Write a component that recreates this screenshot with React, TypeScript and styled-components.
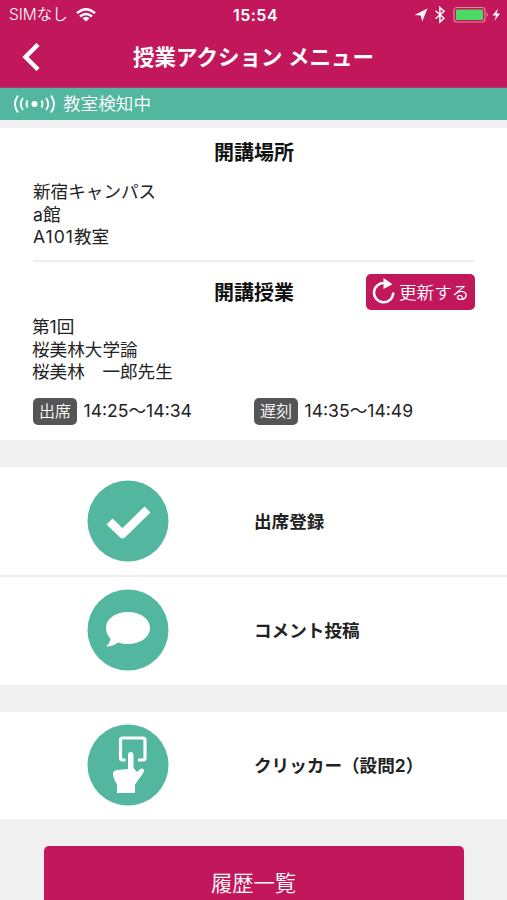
import React from "react";
import styled, { createGlobalStyle } from "styled-components";

const PINK = "#c2185b";
const GREEN = "#53b79f";

const Global = createGlobalStyle`
  * { box-sizing: border-box; }
  body { margin: 0; background: #f0f0f0; }
`;

const Screen = styled.div`
  height: 900px;
  overflow: hidden;
  display: flex;
  flex-direction: column;
  background: #f0f0f0;
  color: #222;
  font-family: Inter, "Noto Sans CJK JP", sans-serif;
  font-size: 17.6px;
  svg { display: block; flex: none; }
`;

const Header = styled.header`
  flex: none;
  height: 87.5px;
  background: ${PINK};
  color: #fff;
  border-bottom: 1px solid #a04463;
`;

const StatusBar = styled.div`
  height: 30px;
  display: grid;
  grid-template-columns: 1fr auto 1fr;
  align-items: center;
  padding: 0 5px 0 9px;
`;

const Carrier = styled.div`
  display: flex;
  align-items: center;
  gap: 8px;
  font-size: 15.5px;
  font-weight: 350;
  line-height: 30px;
`;

const Clock = styled.div`
  font-size: 16px;
  font-weight: 600;
  letter-spacing: 0.5px;
  line-height: 30px;
`;

const Indicators = styled.div`
  display: flex;
  align-items: center;
  justify-content: flex-end;
`;

const NavBar = styled.div`
  display: grid;
  grid-template-columns: 50px 1fr 50px;
  align-items: center;
  height: 54px;
`;

const BackButton = styled.button`
  border: 0;
  padding: 0 0 0 22px;
  background: none;
  color: inherit;
`;

const Title = styled.h1`
  margin: 0;
  text-align: center;
  font-size: 21.5px;
  font-weight: 600;
  line-height: 54px;
  white-space: nowrap;
`;

const Detecting = styled.div`
  flex: none;
  height: 32px;
  display: flex;
  align-items: center;
  gap: 8px;
  padding-left: 13px;
  background: ${GREEN};
  color: #fff;
  font-weight: 350;
  line-height: 32px;
`;

const Info = styled.section`
  flex: none;
  height: 312px;
  margin-top: 8.5px;
  padding: 0 33px;
  background: #fff;
`;

const Heading = styled.h2`
  margin: 0;
  grid-column: 2;
  text-align: center;
  color: #111;
  font-size: 20px;
  font-weight: 700;
  line-height: 50px;
`;

const Lines = styled.div<{ $shift?: boolean }>`
  margin-left: ${(p) => (p.$shift ? "-1px" : "0")};
  line-height: 22.5px;
  white-space: pre;
`;

const Room = styled.span`
  letter-spacing: 1px;
`;

const Place = styled.div`
  height: 134px;
  margin-right: -1px;
  border-bottom: 2px solid #eee;
  & > ${Lines} { margin-top: 3px; }
`;

const LessonHead = styled.div`
  height: 54px;
  margin-right: -1px;
  display: grid;
  grid-template-columns: 1fr auto 1fr;
  align-items: center;
  padding-top: 6px;
`;

const Refresh = styled.button`
  justify-self: end;
  width: 109px;
  height: 36px;
  margin-top: -3px;
  display: flex;
  align-items: center;
  gap: 3px;
  padding: 0 0 1px 6px;
  border: 0;
  border-radius: 5px;
  background: ${PINK};
  color: #fff;
  font: inherit;
  font-weight: 350;
  white-space: nowrap;
`;

const Times = styled.div`
  display: grid;
  grid-template-columns: 221px 1fr;
  margin-top: 14px;
`;

const Time = styled.div`
  display: flex;
  align-items: center;
  gap: 6.5px;
  font-size: 17.6px;
  line-height: 25px;
  white-space: nowrap;
`;

const TimeRange = styled.span`
  margin-top: -2px;
`;

const Tag = styled.span`
  width: 44px;
  height: 27px;
  border-radius: 5px;
  background: #555;
  color: #fff;
  font-size: 16px;
  font-weight: 350;
  line-height: 26px;
  text-align: center;
`;

const Menu = styled.nav`
  flex: none;
  margin-top: 27px;
  background: #fff;
`;

const MenuItem = styled.div`
  height: 107.5px;
  display: grid;
  grid-template-columns: 87px 167px 1fr;
  align-items: center;
  font-weight: 600;
  & + & { height: 110px; border-top: 2px solid #eee; padding-bottom: 1px; }
  svg { grid-column: 2; }
`;

const MenuLabel = styled.span`
  padding-top: 2px;
  line-height: 24px;
`;

const History = styled.button`
  flex: none;
  align-self: center;
  width: 420px;
  height: 74px;
  margin-top: 27px;
  padding: 0 0 4px;
  border: 0;
  border-radius: 5px;
  background: ${PINK};
  color: #fff;
  font: inherit;
  font-size: 21.3px;
  font-weight: 350;
`;

const Wifi = () => (
  <svg width="20" height="14" viewBox="0 0 20 14" fill="none" stroke="#fff" strokeWidth="2.4">
    <path d="M1 5.200Q10-2.600 19 5.200M4 8.500Q10 3.400 16 8.500" />
    <path d="M6.500 10.200Q10 7.200 13.500 10.200L10 13.600Z" fill="#fff" stroke="none" />
  </svg>
);

const StatusIcons = () => (
  <svg width="90" height="18" viewBox="412 6 90 18" fill="none">
    <path d="M427.500 8.500L422.200 21.500L420.700 15.600L414.500 15Z" fill="#fff" />
    <path d="M435.500 10.800L444 18.300L439.900 22V7.500L444 11.200L435.500 18.700" stroke="#fff" strokeWidth="1.500" />
    <rect x="454" y="7.500" width="31" height="14.500" rx="3" stroke="#dc8ba0" strokeWidth="1.200" />
    <rect x="456" y="9.500" width="27" height="10.500" rx="1" fill="#4cd964" />
    <path d="M486.700 12.300Q489 14.700 486.700 17.200Z" fill="#dc8ba0" />
    <path d="M498 8.500L492.500 15.500H496L494.500 21L500 13.600H496.500Z" fill="#fff" />
  </svg>
);

const Chevron = () => (
  <svg width="18" height="28" viewBox="0 0 18 28" fill="none" stroke="#fff" strokeWidth="4.500">
    <path d="M16 1.500L3.500 14L16 26.500" />
  </svg>
);

const Signal = () => (
  <svg width="42" height="20" viewBox="0 0 42 20" fill="none" stroke="#fff" strokeWidth="1.900">
    <circle cx="21.500" cy="10" r="3" fill="#fff" stroke="none" />
    <path d="M14.500 6.500Q12.500 10 14.500 13.500M28.500 6.500Q30.500 10 28.500 13.500M10 4Q5.500 10 10 16M33 4Q37.500 10 33 16M5 1.500Q-1 10 5 18.500M38 1.500Q44 10 38 18.500" />
  </svg>
);

const RefreshIcon = () => (
  <svg width="24" height="26" viewBox="0 0 24 26" fill="none">
    <path d="M13 5.200A9.600 9.600 0 1 0 21.200 14.500" stroke="#fff" strokeWidth="2.500" />
    <path d="M11.500 0L20.500 6.200L11.500 11Z" fill="#fff" />
  </svg>
);

const Disc = ({ children }: { children: React.ReactNode }) => (
  <svg width="82" height="82" viewBox="0 0 82 82">
    <circle cx="41" cy="41" r="40.500" fill={GREEN} />
    {children}
  </svg>
);

export default function App() {
  return (
    <>
      <Global />
      <Screen>
        <Header>
          <StatusBar>
            <Carrier>SIMなし<Wifi /></Carrier>
            <Clock>15:54</Clock>
            <Indicators><StatusIcons /></Indicators>
          </StatusBar>
          <NavBar>
            <BackButton aria-label="戻る"><Chevron /></BackButton>
            <Title>授業アクション メニュー</Title>
          </NavBar>
        </Header>
        <Detecting><Signal />教室検知中</Detecting>
        <Info>
          <Place>
            <Heading>開講場所</Heading>
            <Lines>{"新宿キャンパス\na館\n"}<Room>A101</Room>教室</Lines>
          </Place>
          <LessonHead>
            <Heading>開講授業</Heading>
            <Refresh><RefreshIcon />更新する</Refresh>
          </LessonHead>
          <Lines $shift>{"第1回\n桜美林大学論\n桜美林　一郎先生"}</Lines>
          <Times>
            <Time><Tag>出席</Tag><TimeRange>14:25〜14:34</TimeRange></Time>
            <Time><Tag>遅刻</Tag><TimeRange>14:35〜14:49</TimeRange></Time>
          </Times>
        </Info>
        <Menu>
          <MenuItem>
            <Disc>
              <path d="M22.500 41.500L35.500 54L60.500 29.500" fill="none" stroke="#fff" strokeWidth="8.500" strokeLinejoin="round" />
            </Disc>
            <MenuLabel>出席登録</MenuLabel>
          </MenuItem>
          <MenuItem>
            <Disc>
              <path d="M41 23C53.500 23 63 30 63 39S53.500 55 41 55Q35.500 55 31 53.500Q26 57.500 19 57.500Q23 54 23.500 49.500C20.500 46.500 19 43 19 39C19 30 28.500 23 41 23Z" fill="#fff" />
            </Disc>
            <MenuLabel>コメント投稿</MenuLabel>
          </MenuItem>
        </Menu>
        <Menu>
          <MenuItem>
            <Disc>
              <path d="M38.500 36H35.500Q33.500 36 33.500 34V16Q33.500 14 35.500 14H56Q58 14 58 16V34Q58 36 56 36H51" fill="none" stroke="#fff" strokeWidth="3.200" />
              <path d="M41 45V31Q41 28 43.700 28T46.500 31V44L50 48L54 44.500Q56.500 44 57 46Q57.300 47.500 55.500 50L48 60.500V69H30V60Q27 57 26 50Q26 46.500 30 46Z" fill="#fff" />
            </Disc>
            <MenuLabel>クリッカー（設問2）</MenuLabel>
          </MenuItem>
        </Menu>
        <History>履歴一覧</History>
      </Screen>
    </>
  );
}
